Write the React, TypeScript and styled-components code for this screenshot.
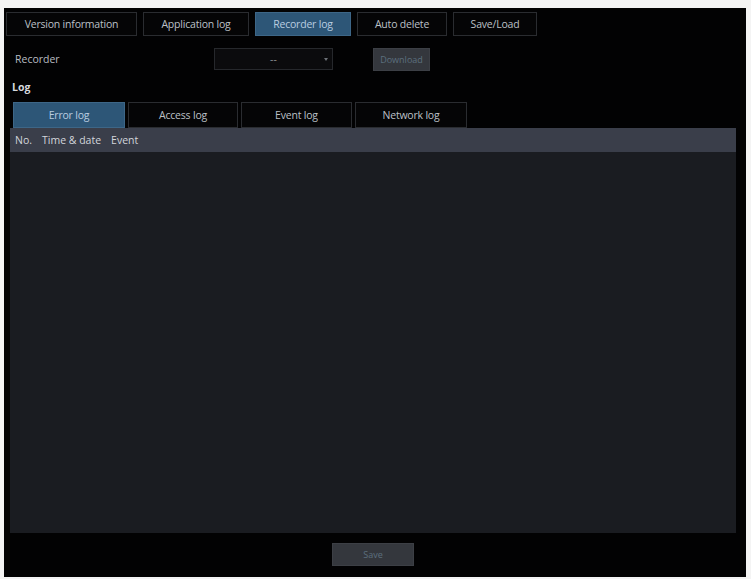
import styled, { createGlobalStyle } from "styled-components";

const GlobalStyle = createGlobalStyle`
    html, body {
        margin: 0;
        padding: 0;
        background: #f4f4f4;
    }
    body {
        font-family: "Open Sans", "Liberation Sans", sans-serif;
    }
`;

const Screen = styled.div`
    margin: 8px 5px 2px 4px;
    height: 569px;
    background: #020203;
    display: flex;
    flex-direction: column;
    padding: 4px 10px 0 2px;
    box-sizing: border-box;
    color: #c8ccd2;
    font-size: 10.5px;
`;

const TabBar = styled.div`
    display: flex;
    gap: 6px;
    height: 24px;
`;

const Tab = styled.div<{ $active?: boolean; $w: number }>`
    width: ${(p) => p.$w}px;
    box-sizing: border-box;
    display: flex;
    align-items: center;
    justify-content: center;
    border: 1px solid ${(p) => (p.$active ? "#3d6687" : "#2a2c30")};
    background: ${(p) => (p.$active ? "#2d5677" : "#050506")};
    color: ${(p) => (p.$active ? "#b9cde0" : "#bcc0c6")};
    letter-spacing: -0.2px;
`;

const Row = styled.div`
    display: flex;
    align-items: center;
    height: 22px;
    margin-top: 12px;
    padding-left: 9px;
`;

const Label = styled.div`
    width: 199px;
    color: #b8bcc2;
`;

const Select = styled.div`
    width: 119px;
    height: 22px;
    box-sizing: border-box;
    border: 1px solid #26282c;
    background: #0b0b0d;
    display: flex;
    align-items: center;
    justify-content: center;
    position: relative;
    color: #8a8e94;
    &::after {
        content: "";
        position: absolute;
        right: 4px;
        top: 9px;
        border: 2.5px solid transparent;
        border-top: 3px solid #6d7177;
    }
`;

const Spacer = styled.div<{ $w: number }>`
    width: ${(p) => p.$w}px;
`;

const Button = styled.div<{ $w: number }>`
    width: ${(p) => p.$w}px;
    height: 23px;
    box-sizing: border-box;
    background: #34373d;
    border: 1px solid #3c3f45;
    color: #5c6f7d;
    font-size: 9px;
    display: flex;
    align-items: center;
    justify-content: center;
`;

const Heading = styled.div`
    font-weight: 700;
    color: #d6d9de;
    margin: 10px 0 0 6px;
    height: 14px;
    line-height: 14px;
`;

const SubTabs = styled.div`
    display: flex;
    gap: 3px;
    margin: 8px 0 0 7px;
    height: 26px;
`;

const Table = styled.div`
    margin-left: 4px;
    flex: 1;
    display: flex;
    flex-direction: column;
    max-height: 405px;
`;

const HeadRow = styled.div`
    height: 24px;
    background: #3a3e4a;
    display: flex;
    align-items: center;
    gap: 10px;
    padding-left: 5px;
    color: #d2d5da;
`;

const Body = styled.div`
    flex: 1;
    background: #1a1c21;
`;

const Footer = styled.div`
    display: flex;
    justify-content: center;
    padding: 10px 0 0 4px;
`;

const topTabs = [
    { label: "Version information", w: 131 },
    { label: "Application log", w: 106 },
    { label: "Recorder log", w: 96, active: true },
    { label: "Auto delete", w: 90 },
    { label: "Save/Load", w: 84 },
];

const logTabs = [
    { label: "Error log", w: 112, active: true },
    { label: "Access log", w: 110 },
    { label: "Event log", w: 111 },
    { label: "Network log", w: 112 },
];

const App = () => {
    return (
        <>
            <GlobalStyle />
            <Screen>
                <TabBar>
                    {topTabs.map((t) => (
                        <Tab key={t.label} $w={t.w} $active={t.active}>{t.label}</Tab>
                    ))}
                </TabBar>
                <Row>
                    <Label>Recorder</Label>
                    <Select>--</Select>
                    <Spacer $w={40} />
                    <Button $w={57}>Download</Button>
                </Row>
                <Heading>Log</Heading>
                <SubTabs>
                    {logTabs.map((t) => (
                        <Tab key={t.label} $w={t.w} $active={t.active}>{t.label}</Tab>
                    ))}
                </SubTabs>
                <Table>
                    <HeadRow>
                        <span>No.</span>
                        <span>Time &amp; date</span>
                        <span>Event</span>
                    </HeadRow>
                    <Body />
                </Table>
                <Footer>
                    <Button $w={82}>Save</Button>
                </Footer>
            </Screen>
        </>
    );
};

export default App;
